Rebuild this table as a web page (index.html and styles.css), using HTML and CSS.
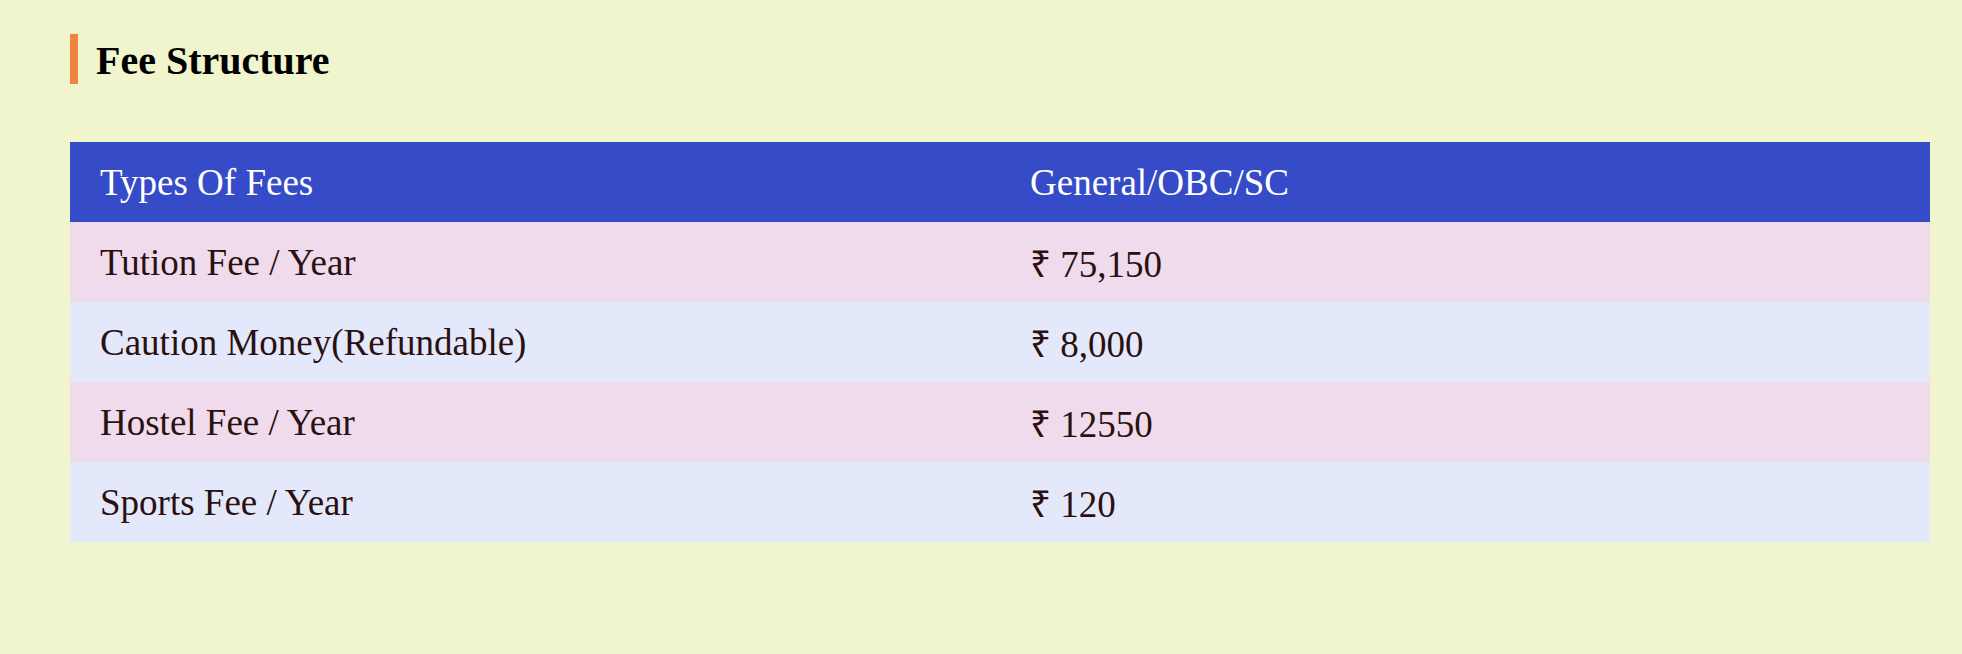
FILE: index.html
```html
<!DOCTYPE html>
<html lang="en">
<head>
<meta charset="utf-8">
<title>Fee Structure</title>
<link rel="stylesheet" href="styles.css">
</head>
<body>
<section class="fees">
  <h2 class="fees-title">Fee Structure</h2>
  <table class="fees-table">
    <thead>
      <tr><th>Types Of Fees</th><th>General/OBC/SC</th></tr>
    </thead>
    <tbody>
      <tr><td>Tution Fee / Year</td><td>₹ 75,150</td></tr>
      <tr><td>Caution Money(Refundable)</td><td>₹ 8,000</td></tr>
      <tr><td>Hostel Fee / Year</td><td>₹ 12550</td></tr>
      <tr><td>Sports Fee / Year</td><td>₹ 120</td></tr>
    </tbody>
  </table>
</section>
</body>
</html>
```
FILE: styles.css
```css
html, body {
  margin: 0;
  padding: 0;
  background: #f0f5cd;
}
body {
  font-family: "Liberation Serif", "Times New Roman", serif;
}
.fees {
  padding: 34px 32px 0 70px;
}
.fees-title {
  margin: 0;
  height: 50px;
  line-height: 54px;
  border-left: 8px solid #ef8442;
  padding-left: 18px;
  font-size: 40px;
  font-weight: bold;
  color: #000;
}
.fees-table {
  margin-top: 58px;
  width: 1860px;
  border-collapse: collapse;
  table-layout: fixed;
  font-size: 37px;
}
.fees-table th,
.fees-table td {
  height: 80px;
  padding: 0 30px;
  text-align: left;
  vertical-align: middle;
  box-sizing: border-box;
}
.fees-table th {
  background: #364bc8;
  color: #fff;
  font-weight: normal;
}
.fees-table td {
  color: #2b1010;
}
.fees-table tbody tr:nth-child(odd) {
  background: #efdbec;
}
.fees-table tbody tr:nth-child(even) {
  background: #e3e9fb;
}
```
